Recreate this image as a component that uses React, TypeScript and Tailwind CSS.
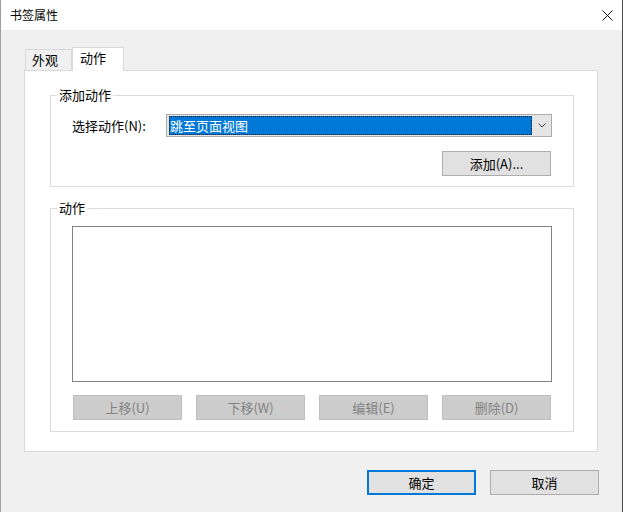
import React from 'react';

const btn =
  'w-[109px] h-[25px] flex items-center justify-center text-[13px] leading-[18px]';

function GroupLabel({ text }: { text: string }) {
  return (
    <div className="absolute left-[6px] top-[-10px] bg-white px-[2px] text-[13px] leading-[18px]">
      {text}
    </div>
  );
}

export default function App() {
  return (
    <div className="w-[623px] h-[512px] flex flex-col bg-[#f0f0f0] border-l border-l-[#a0a0a0] border-r border-r-[#4a4a4a] text-black font-['Microsoft_YaHei_UI','Noto_Sans_CJK_SC','Noto_Sans',sans-serif]">
      {/* title bar */}
      <div className="h-[30px] shrink-0 bg-white flex items-center justify-between pl-[9px] pr-[9px]">
        <span className="text-[12px] leading-[16px]">书签属性</span>
        <svg width="11" height="11" viewBox="0 0 11 11">
          <path d="M0.5 0.5 L10.5 10.5 M10.5 0.5 L0.5 10.5" stroke="#111" strokeWidth="1" />
        </svg>
      </div>

      <div className="flex-1 flex flex-col pl-[23px] pt-[17px]">
        {/* tabs */}
        <div className="h-[23px] flex items-end pl-[1px]">
          <div className="w-[47px] h-[21px] border border-b-0 border-[#d9d9d9] bg-[#f0f0f0] pl-[6px] text-[13px] leading-[20px]">
            外观
          </div>
          <div className="relative z-10 -mb-px w-[52px] h-[24px] border border-b-0 border-[#d9d9d9] bg-white pl-[7px] pt-[1px] text-[13px] leading-[18px]">
            动作
          </div>
        </div>

        {/* tab panel */}
        <div className="w-[574px] h-[382px] bg-white border border-[#d9d9d9] pl-[25px] pt-[24px]">
          {/* 添加动作 */}
          <div className="relative w-[524px] h-[92px] border border-[#dcdcdc] pt-[18px]">
            <GroupLabel text="添加动作" />
            <div className="flex items-center pl-[21px]">
              <div className="w-[94px] text-[13px] leading-[18px]">选择动作(N):</div>
              <div className="w-[386px] h-[23px] border border-[#acacac] bg-[#e5e5e5] flex items-center pl-[2px]">
                <div className="w-[363px] h-[19px] bg-[#0078d7] outline outline-1 outline-dotted outline-[#1a1a1a] -outline-offset-1 text-white text-[13px] leading-[19px] pl-[1px]">
                  跳至页面视图
                </div>
                <div className="flex-1 flex items-center justify-center">
                  <svg width="8" height="5" viewBox="0 0 8 5">
                    <path d="M0.5 0.5 L4 4 L7.5 0.5" fill="none" stroke="#444" strokeWidth="1" />
                  </svg>
                </div>
              </div>
            </div>
            <div className="flex justify-end pr-[22px] mt-[14px]">
              <button className={`${btn} bg-[#e1e1e1] border border-[#adadad]`}>添加(A)...</button>
            </div>
          </div>

          {/* 动作 */}
          <div className="relative w-[524px] h-[224px] mt-[21px] border border-[#dcdcdc] pt-[17px]">
            <GroupLabel text="动作" />
            <div className="ml-[21px] w-[480px] h-[156px] border border-[#828282] bg-white" />
            <div className="flex gap-[14px] pl-[22px] mt-[13px]">
              {['上移(U)', '下移(W)', '编辑(E)', '删除(D)'].map((t) => (
                <button
                  key={t}
                  disabled
                  className={`${btn} bg-[#cccccc] border border-[#bfbfbf] text-[#838383]`}
                >
                  {t}
                </button>
              ))}
            </div>
          </div>
        </div>

        {/* dialog buttons */}
        <div className="flex justify-end gap-[14px] pr-[23px] mt-[18px]">
          <button className={`${btn} bg-[#e1e1e1] border-2 border-[#0078d7]`}>确定</button>
          <button className={`${btn} bg-[#e1e1e1] border border-[#adadad]`}>取消</button>
        </div>
      </div>
    </div>
  );
}
